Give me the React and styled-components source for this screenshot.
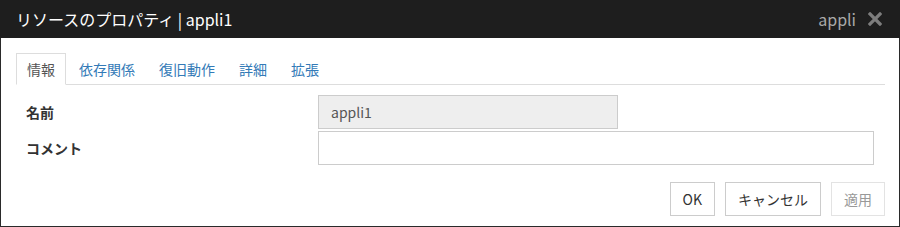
import styled, { createGlobalStyle } from 'styled-components'

const Global = createGlobalStyle`
  html, body { margin: 0; padding: 0; background: #fff; }
  body { font-family: "Noto Sans CJK JP", "Noto Sans", sans-serif; }
  * { box-sizing: border-box; }
`

const Dialog = styled.div`
  width: 900px;
  height: 227px;
  display: flex;
  flex-direction: column;
  background: #fff;
`

const Header = styled.div`
  height: 38px;
  flex: none;
  background: #1e1e1e;
  display: flex;
  align-items: center;
  padding: 0 18px 0 16px;
`

const Title = styled.div`
  flex: 1;
  color: #fff;
  font-size: 16px;
  line-height: 1;
  white-space: nowrap;
`

const HeaderName = styled.span`
  color: #a9a9a9;
  font-size: 16px;
  margin-right: 12px;
`

const Close = styled.span`
  display: flex;
  align-items: center;
`

const Body = styled.div`
  flex: 1;
  border: 1px solid #2a2a2a;
  border-top: none;
  padding: 15px 14px 10px 15px;
  display: flex;
  flex-direction: column;
`

const Tabs = styled.div`
  display: flex;
  border-bottom: 1px solid #ddd;
  height: 32px;
`

const Tab = styled.div`
  padding: 0 10px;
  margin-right: 2px;
  font-size: 14px;
  line-height: 30px;
  border: 1px solid ${p => (p.$active ? '#ddd' : 'transparent')};
  border-bottom: ${p => (p.$active ? '1px solid #fff' : 'none')};
  margin-bottom: ${p => (p.$active ? '-1px' : '0')};
  background: #fff;
  color: ${p => (p.$active ? '#555' : '#337ab7')};
  white-space: nowrap;
`

const Form = styled.div`
  display: flex;
  flex-direction: column;
  gap: 2px;
  padding: 10px 11px 0 10px;
`

const Row = styled.div`
  display: flex;
  align-items: center;
`

const Label = styled.div`
  width: 292px;
  font-size: 14px;
  font-weight: bold;
  color: #333;
`

const Input = styled.div`
  width: ${p => p.$width}px;
  height: 34px;
  border: 1px solid #ccc;
  background: ${p => (p.$disabled ? '#eee' : '#fff')};
  color: #555;
  font-size: 14px;
  padding: 0 12px;
  display: flex;
  align-items: center;
`

const Footer = styled.div`
  display: flex;
  justify-content: flex-end;
  gap: 10px;
  margin-top: 17px;
`

const Button = styled.button`
  height: 34px;
  padding: 0 ${p => p.$pad}px;
  border: 1px solid ${p => (p.disabled ? '#e3e3e3' : '#ccc')};
  background: #fff;
  color: ${p => (p.disabled ? '#999' : '#333')};
  font-family: inherit;
  font-size: 14px;
`

export default function App() {
  return (
    <>
      <Global />
      <Dialog>
        <Header>
          <Title>リソースのプロパティ | appli1</Title>
          <HeaderName>appli</HeaderName>
          <Close>
            <svg width="14" height="14" viewBox="0 0 14 14">
              <path d="M2 2 L12 12 M12 2 L2 12" stroke="#7d7d7d" strokeWidth="3.2" strokeLinecap="square" />
            </svg>
          </Close>
        </Header>
        <Body>
          <Tabs>
            <Tab $active>情報</Tab>
            <Tab>依存関係</Tab>
            <Tab>復旧動作</Tab>
            <Tab>詳細</Tab>
            <Tab>拡張</Tab>
          </Tabs>
          <Form>
            <Row>
              <Label>名前</Label>
              <Input $width={300} $disabled>appli1</Input>
            </Row>
            <Row>
              <Label>コメント</Label>
              <Input $width={556} />
            </Row>
          </Form>
          <Footer>
            <Button $pad={12}>OK</Button>
            <Button $pad={12}>キャンセル</Button>
            <Button $pad={12} disabled>適用</Button>
          </Footer>
        </Body>
      </Dialog>
    </>
  )
}
